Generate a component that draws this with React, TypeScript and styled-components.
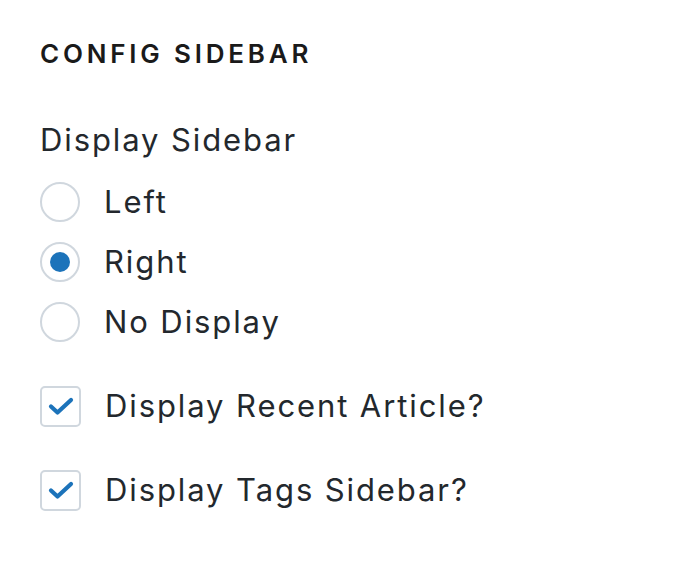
import React from "react";
import styled, { createGlobalStyle } from "styled-components";

const Global = createGlobalStyle`
  html, body { margin: 0; padding: 0; background: #fff; }
  body { font-family: Inter, "Noto Sans", sans-serif; color: #23282d; }
`;

const Panel = styled.div`
  padding: 38px 40px;
  display: flex;
  flex-direction: column;
`;

const Title = styled.h2`
  margin: 0 0 52px;
  font-size: 26px;
  font-weight: 600;
  letter-spacing: 3.8px;
  line-height: 32px;
  text-transform: uppercase;
  color: #1a1a1a;
`;

const Legend = styled.div`
  font-size: 31px;
  letter-spacing: 1.9px;
  line-height: 36px;
  margin-bottom: 24px;
`;

const OptionList = styled.div`
  display: flex;
  flex-direction: column;
  gap: 20px;
  margin-bottom: 44px;
`;

const Row = styled.label`
  display: flex;
  align-items: center;
  gap: 24px;
  font-size: 31px;
  letter-spacing: 1.9px;
  line-height: 40px;
  height: 40px;
`;

const RadioMark = styled.span<{ $checked?: boolean }>`
  width: 40px;
  height: 40px;
  box-sizing: border-box;
  border: 2.5px solid #d0d7de;
  border-radius: 50%;
  display: flex;
  align-items: center;
  justify-content: center;
  flex: none;
  &::after {
    content: "";
    width: 20px;
    height: 20px;
    border-radius: 50%;
    background: #1c73ba;
    display: ${(p) => (p.$checked ? "block" : "none")};
  }
`;

const CheckList = styled.div`
  display: flex;
  flex-direction: column;
  gap: 44px;
`;

const CheckMark = styled.span`
  width: 41px;
  height: 41px;
  box-sizing: border-box;
  border: 2.5px solid #d0d7de;
  border-radius: 5px;
  display: flex;
  align-items: center;
  justify-content: center;
  flex: none;
`;

const Check = () => (
  <svg width="26" height="20" viewBox="0 0 26 20">
    <path d="M3 10.5 L9.5 16.5 L23 4" fill="none" stroke="#1c73ba" strokeWidth="4.2" strokeLinecap="round" strokeLinejoin="round" />
  </svg>
);

export default function App() {
  return (
    <>
      <Global />
      <Panel>
        <Title>Config Sidebar</Title>
        <Legend>Display Sidebar</Legend>
        <OptionList>
          <Row><RadioMark />Left</Row>
          <Row><RadioMark $checked />Right</Row>
          <Row><RadioMark />No Display</Row>
        </OptionList>
        <CheckList>
          <Row><CheckMark><Check /></CheckMark>Display Recent Article?</Row>
          <Row><CheckMark><Check /></CheckMark>Display Tags Sidebar?</Row>
        </CheckList>
      </Panel>
    </>
  );
}
